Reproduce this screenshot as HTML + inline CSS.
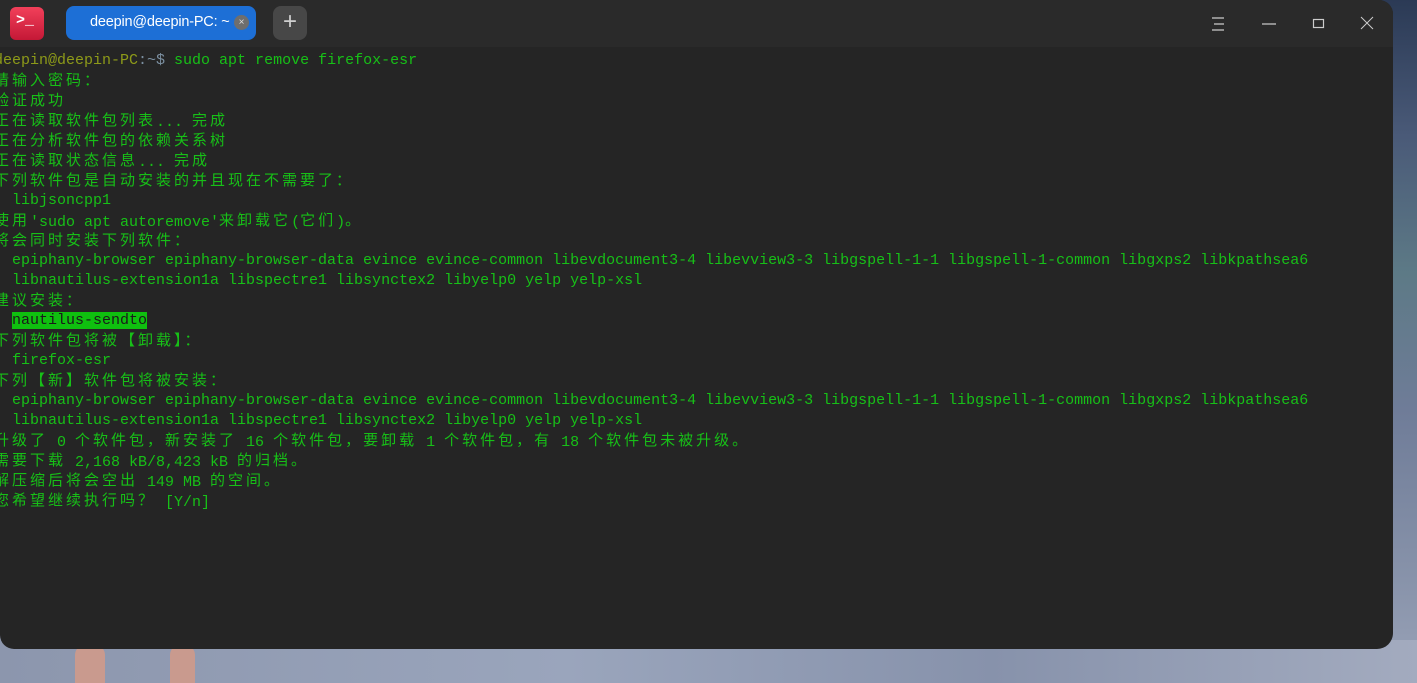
<!DOCTYPE html>
<html><head><meta charset="utf-8"><style>
html,body{margin:0;padding:0;width:1417px;height:683px;overflow:hidden;}
body{background:linear-gradient(180deg,#2b3a55 0%,#4a5a78 20%,#5d7a86 40%,#6f7c98 60%,#8893aa 85%,#9aa3b8 100%);position:relative;font-family:"Liberation Sans","Noto Sans CJK SC",sans-serif;}
.bot{position:absolute;left:0;top:640px;width:1417px;height:43px;background:linear-gradient(90deg,#8c96ad,#9aa5bc 40%,#8792ab 70%,#a3abbf);}
.leg{position:absolute;top:645px;width:30px;height:40px;background:#c99a8e;border-radius:10px 10px 0 0;}
.win{position:absolute;left:0;top:0;width:1393px;height:649px;background:#252525;border-radius:0 14px 16px 14px;overflow:hidden;}
.bar{position:absolute;left:0;top:0;width:100%;height:47px;background:#2a2a2a;}
.logo{position:absolute;left:10px;top:7px;width:34px;height:33px;border-radius:6px;background:linear-gradient(180deg,#f2405a,#c41836);color:#fff;font:bold 15px "Liberation Mono",monospace;}
.logo span{position:absolute;left:6px;top:5px;}
.tab{position:absolute;left:66px;top:6px;width:190px;height:34px;background:#1d6fd6;border-radius:8px;color:#fff;font-size:14.5px;letter-spacing:-0.2px;}
.tab .t{position:absolute;left:24px;top:8px;}
.tab .x{position:absolute;left:168px;top:9px;width:15px;height:15px;border-radius:50%;background:#6e6e6e;color:#ddd;font-size:10px;line-height:15px;text-align:center;}
.plus{position:absolute;left:273px;top:6px;width:34px;height:34px;background:#474747;border-radius:8px;color:#cfcfcf;font-size:24px;line-height:32px;text-align:center;}
.ctl{position:absolute;top:14px;}
.term{position:absolute;left:-6px;top:51px;font:15px "Liberation Mono",monospace;color:#17c017;}
.term div{height:20px;line-height:20px;white-space:pre;}
.c{font-family:"Noto Sans CJK SC",sans-serif;letter-spacing:3px;font-size:15px;line-height:20px;position:relative;top:-1px;}
.u{color:#8d9a19;}
.p{color:#7b8fa0;}
.hl{background:#0fc00f;color:#1a1a1a;}
</style></head><body>
<div class="bot"></div><div class="leg" style="left:75px"></div><div class="leg" style="left:170px;width:25px"></div>
<div class="win">
<div class="bar">
<div class="logo"><span>&gt;_</span></div>
<div class="tab"><span class="t">deepin@deepin-PC: ~</span><span class="x">×</span></div>
<div class="plus">+</div>
<svg class="ctl" style="left:1208px" width="20" height="20"><path d="M4 4h12M6 10h10M4 16h12" stroke="#ccc" stroke-width="1.2"/></svg>
<svg class="ctl" style="left:1259px" width="20" height="20"><path d="M3 10h14" stroke="#ccc" stroke-width="1.2"/></svg>
<svg class="ctl" style="left:1309px" width="20" height="20"><rect x="4.5" y="5.5" width="10" height="8" fill="none" stroke="#ccc" stroke-width="1.2"/></svg>
<svg class="ctl" style="left:1358px" width="20" height="20"><path d="M3 3l12 12M15 3L3 15" stroke="#ccc" stroke-width="1"/></svg>
</div>
<div class="term"><div><span class="u">deepin@deepin-PC</span><span class="p">:~$</span> sudo apt remove firefox-esr</div><div><span class="c">请输入密码：</span></div><div><span class="c">验证成功</span></div><div><span class="c">正在读取软件包列表</span>... <span class="c">完成</span></div><div><span class="c">正在分析软件包的依赖关系树</span></div><div><span class="c">正在读取状态信息</span>... <span class="c">完成</span></div><div><span class="c">下列软件包是自动安装的并且现在不需要了：</span></div><div>  libjsoncpp1</div><div><span class="c">使用</span>'sudo apt autoremove'<span class="c">来卸载它</span>(<span class="c">它们</span>)<span class="c">。</span></div><div><span class="c">将会同时安装下列软件：</span></div><div>  epiphany-browser epiphany-browser-data evince evince-common libevdocument3-4 libevview3-3 libgspell-1-1 libgspell-1-common libgxps2 libkpathsea6</div><div>  libnautilus-extension1a libspectre1 libsynctex2 libyelp0 yelp yelp-xsl</div><div><span class="c">建议安装：</span></div><div>  <span class="hl">nautilus-sendto</span></div><div><span class="c">下列软件包将被【卸载】：</span></div><div>  firefox-esr</div><div><span class="c">下列【新】软件包将被安装：</span></div><div>  epiphany-browser epiphany-browser-data evince evince-common libevdocument3-4 libevview3-3 libgspell-1-1 libgspell-1-common libgxps2 libkpathsea6</div><div>  libnautilus-extension1a libspectre1 libsynctex2 libyelp0 yelp yelp-xsl</div><div><span class="c">升级了</span> 0 <span class="c">个软件包，新安装了</span> 16 <span class="c">个软件包，要卸载</span> 1 <span class="c">个软件包，有</span> 18 <span class="c">个软件包未被升级。</span></div><div><span class="c">需要下载</span> 2,168 kB/8,423 kB <span class="c">的归档。</span></div><div><span class="c">解压缩后将会空出</span> 149 MB <span class="c">的空间。</span></div><div><span class="c">您希望继续执行吗？</span> [Y/n]</div></div>
</div>
</body></html>
